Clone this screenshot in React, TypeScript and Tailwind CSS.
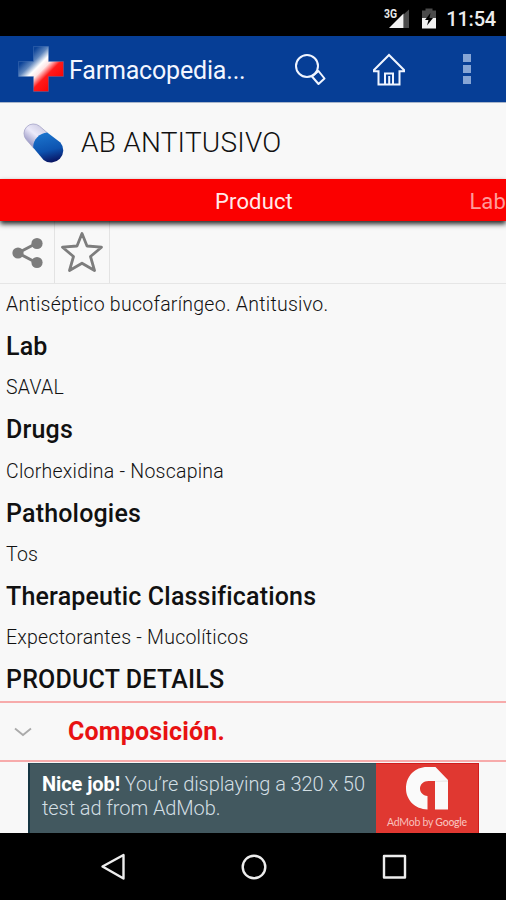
import React from 'react';

interface Section {
  title: string;
  value?: string;
}

const sections: Section[] = [
  { title: 'Lab', value: 'SAVAL' },
  { title: 'Drugs', value: 'Clorhexidina - Noscapina' },
  { title: 'Pathologies', value: 'Tos' },
  { title: 'Therapeutic Classifications', value: 'Expectorantes - Mucolíticos' },
  { title: 'PRODUCT DETAILS' },
];

const StatusBar: React.FC = () => (
  <div className="flex h-9 items-center justify-end bg-black pr-[10px] text-white">
    <svg width="27" height="24" viewBox="0 0 27 24" className="mr-[11px]">
      <text x="1" y="12" fontSize="12.5" fontWeight="700" fill="#e8e8e8" textLength="13" lengthAdjust="spacingAndGlyphs">3G</text>
      <path d="M26 3.500v18.500h-5.500V8.500z" fill="#4b4b4b" />
      <path d="M6 22L20.500 7.500V22z" fill="#f2f2f2" />
    </svg>
    <svg width="16" height="22" viewBox="0 0 16 22" className="mr-[9px]">
      <path d="M1 3.500h3.500V1.500h7v2H15v8.500H1z" fill="#4b4b4b" />
      <path d="M1 11h14v10.500H1z" fill="#f2f2f2" />
      <path d="M9.500 6L4 13h3.500L6 18.500l6-7.500H8.500z" fill="#000" />
    </svg>
    <span className="mt-[2px] text-[20px] font-medium leading-none tracking-[-0.2px] text-[#ececec]">11:54</span>
  </div>
);

const CrossLogo: React.FC = () => (
  <svg width="46" height="46" viewBox="0 0 46 46">
    <defs>
      <linearGradient id="cross" x1="6" y1="6" x2="40" y2="40" gradientUnits="userSpaceOnUse">
        <stop offset="0.12" stopColor="#0c4398" />
        <stop offset="0.28" stopColor="#5f86bd" />
        <stop offset="0.42" stopColor="#ffffff" />
        <stop offset="0.53" stopColor="#ffe4e4" />
        <stop offset="0.68" stopColor="#ff1a1a" />
        <stop offset="1" stopColor="#f80000" />
      </linearGradient>
    </defs>
    <path d="M15.500 0.500H30.500V15.500H45.500V30.500H30.500V45.500H15.500V30.500H0.500V15.500H15.500z" fill="url(#cross)" stroke="#5d83c0" strokeOpacity="0.35" />
  </svg>
);

const ActionBar: React.FC = () => (
  <div className="flex h-[66px] items-center bg-[#063e96]">
    <div className="ml-[18px] h-[46px]">
      <CrossLogo />
    </div>
    <h1 className="ml-[5px] mt-[3px] w-[186px] whitespace-nowrap text-[25px] leading-none tracking-[-0.18px] text-[#f3f6ff]">Farmacopedia...</h1>
    <svg width="34" height="32" viewBox="0 0 34 32" fill="none" stroke="#f0f5ff" strokeWidth="2" strokeLinejoin="round" className="ml-[39px] mt-[2px]">
      <circle cx="13" cy="12" r="11" />
      <path d="M24.500 17L30.500 24.500L24.500 30L18 22.500z" />
    </svg>
    <svg width="34" height="34" viewBox="0 0 34 34" fill="none" stroke="#f0f5ff" strokeWidth="2" className="ml-[44px] mt-[2px]">
      <path d="M2 17L17 2L32 17V18.200H27.500V31.500H6.500V18.200H2z" />
      <path d="M13 31V20.500H21V31M17.200 23V31" />
    </svg>
    <div className="ml-[57px] flex flex-col gap-[3px]">
      <i className="size-[8px] bg-[#86a5d5]" />
      <i className="size-[8px] bg-[#86a5d5]" />
      <i className="size-[8px] bg-[#86a5d5]" />
    </div>
  </div>
);

const PillIcon: React.FC = () => (
  <svg width="44" height="46" viewBox="0 0 44 46" className="mt-[6px]">
    <defs>
      <linearGradient id="pillBlue" x1="22" y1="13" x2="29" y2="43" gradientUnits="userSpaceOnUse">
        <stop offset="0" stopColor="#1a72cb" />
        <stop offset="0.55" stopColor="#0d53b0" />
        <stop offset="1" stopColor="#080c58" />
      </linearGradient>
      <linearGradient id="pillWhite" x1="18" y1="4" x2="5" y2="20" gradientUnits="userSpaceOnUse">
        <stop offset="0" stopColor="#cfcde4" />
        <stop offset="0.5" stopColor="#eceafa" />
        <stop offset="1" stopColor="#a19fc9" />
      </linearGradient>
    </defs>
    <path d="M25 11.500L17.600 5.200A9.500 9.500 0 0 0 4.400 18.800L11.500 27L20 25z" fill="url(#pillWhite)" stroke="#a5a3c8" strokeWidth="0.800" />
    <path d="M11.300 26.800C10.500 19.500 17 12 25.300 11.500L38.400 21.500A12.200 12.200 0 0 1 21.600 39z" fill="url(#pillBlue)" />
  </svg>
);

const Toolbar: React.FC = () => (
  <div className="flex h-[63px] border-b border-[#e6e6e6]">
    <div className="flex w-[55px] items-center border-r border-[#e3e3e3] pl-3">
      <svg width="31" height="32" viewBox="0 0 31 32" fill="#7d7d7d" className="mt-[2px]">
        <path d="M25 6L6 16L25 26" fill="none" stroke="#7d7d7d" strokeWidth="3" />
        <circle cx="6" cy="16" r="5.600" />
        <circle cx="25" cy="6.500" r="5.600" />
        <circle cx="25" cy="25.500" r="5.600" />
      </svg>
    </div>
    <div className="flex w-[55px] items-center justify-center border-r border-[#e3e3e3]">
      <svg width="44" height="42" viewBox="0 0 44 42" fill="none" stroke="#7d7d7d" strokeWidth="2.800" strokeLinejoin="round">
        <path d="M22 2.500L27 15L41.500 16.200L30.500 25.500L34.500 39.500L22 32.200L9.500 39.500L13.500 25.500L2.500 16.200L17 15z" />
      </svg>
    </div>
  </div>
);

const AdBanner: React.FC = () => (
  <div className="ml-[28px] mt-px flex h-[70px] w-[451px]">
    <p className="w-[348px] whitespace-nowrap border-l-2 border-t border-l-[#163643] border-t-[#344e59] bg-[#42585f] pl-[12px] pt-[9px] text-[20px] font-light leading-[23.5px] tracking-[-0.08px] text-[#d3dfe4]">
      <b className="font-bold text-white">Nice job!</b> You’re displaying a 320 x 50
      <br />
      test ad from AdMob.
    </p>
    <div className="flex flex-1 flex-col items-center border-r border-t border-[#cf1d1d] bg-[#e03831] pt-[3px]">
      <svg width="42" height="43" viewBox="0 0 42 43">
        <path d="M21.500 42.500C9 42 0 33 0 21.500C0 9 9 0 21 0H29.500L42 13V42.500H29V14H22.500C17.500 14 14 17.500 14 21.500C14 25.500 17 28.500 21.500 29z" fill="#fafafa" />
        <path d="M29 14L42 13V15H29z" fill="#ececec" />
      </svg>
      <span className="mt-[6px] whitespace-nowrap font-[Lato] text-[10.5px] leading-[12px] tracking-[-0.25px] text-[#f8c1bd]">
        AdMob by <span className="font-medium">Google</span>
      </span>
    </div>
  </div>
);

const NavBar: React.FC = () => (
  <div className="flex h-[67px] items-center bg-black">
    <svg width="506" height="67" viewBox="0 0 506 67" fill="none" stroke="#ededed" strokeWidth="2.400" strokeLinejoin="round">
      <path d="M102.500 33.500L123.500 22V45.500z" />
      <circle cx="254" cy="34" r="11.300" />
      <rect x="384" y="23" width="21" height="21.500" />
    </svg>
  </div>
);

const App: React.FC = () => {
  return (
    <div className="h-[900px] w-[506px] overflow-hidden bg-[#f8f8f8] font-[Roboto,sans-serif] text-[#111]">
      <StatusBar />
      <ActionBar />
      <div className="flex h-[77px] items-center border-t border-[#a9b6cb] pl-[22px]">
        <PillIcon />
        <h2 className="ml-[15px] mt-[3px] text-[28px] font-light leading-none tracking-[0.23px]">AB ANTITUSIVO</h2>
      </div>
      <div className="relative flex h-[42px] items-center bg-[#fb0000] text-[22px] leading-none tracking-[0.15px] shadow-[0_3px_5px_rgba(0,0,0,0.85)]">
        <span className="ml-[215px] mt-[3px] w-[255px] text-[#ffe9e9]">Product</span>
        <span className="mt-[3px] text-[#ff9a9a]">Lab</span>
      </div>
      <Toolbar />
      <div className="h-[417px] pl-[6px] text-[#111]">
        <p className="flex h-[41.65px] items-center whitespace-nowrap text-[19.5px] font-light tracking-[0.26px]">Antiséptico bucofaríngeo. Antitusivo.</p>
        {sections.map((section) => (
          <React.Fragment key={section.title}>
            <h3 className="flex h-[41.65px] items-center whitespace-nowrap pt-px text-[25px] font-medium tracking-[0.18px]">
              {section.title}
            </h3>
            {section.value && (
              <p className="flex h-[41.65px] items-center whitespace-nowrap text-[19.5px] font-light tracking-[0.24px]">
                {section.value}
              </p>
            )}
          </React.Fragment>
        ))}
      </div>
      <div className="flex h-[61px] items-center border-y-2 border-[#f7abab] text-[#e81212]">
        <svg width="18" height="10" viewBox="0 0 18 10" fill="none" stroke="#aaa" strokeWidth="1.800" className="ml-[14px]">
          <path d="M1 1.500L9 8L17 1.500" />
        </svg>
        <span className="ml-9 pt-px text-[25px] font-bold tracking-[0.18px]">Composición.</span>
      </div>
      <AdBanner />
      <NavBar />
    </div>
  );
};

export default App;
